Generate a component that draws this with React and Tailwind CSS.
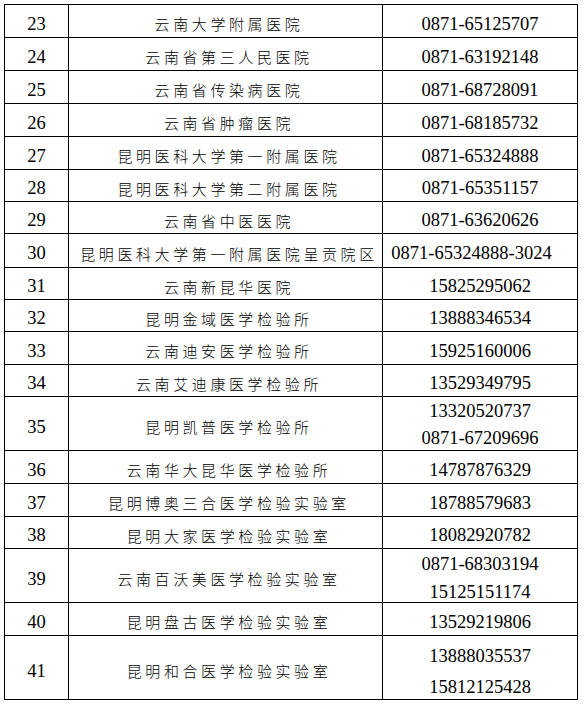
import React from "react";

const rows = [
  { no: "23", name: "云南大学附属医院", phones: ["0871-65125707"], h: "h-[33px]" },
  { no: "24", name: "云南省第三人民医院", phones: ["0871-63192148"], h: "h-[33px]" },
  { no: "25", name: "云南省传染病医院", phones: ["0871-68728091"], h: "h-[33px]" },
  { no: "26", name: "云南省肿瘤医院", phones: ["0871-68185732"], h: "h-[33px]" },
  { no: "27", name: "昆明医科大学第一附属医院", phones: ["0871-65324888"], h: "h-[33px]" },
  { no: "28", name: "昆明医科大学第二附属医院", phones: ["0871-65351157"], h: "h-[32px]" },
  { no: "29", name: "云南省中医医院", phones: ["0871-63620626"], h: "h-[32px]" },
  { no: "30", name: "昆明医科大学第一附属医院呈贡院区", phones: ["0871-65324888-3024"], h: "h-[34px]", wide: true },
  { no: "31", name: "云南新昆华医院", phones: ["15825295062"], h: "h-[32px]" },
  { no: "32", name: "昆明金域医学检验所", phones: ["13888346534"], h: "h-[32px]" },
  { no: "33", name: "云南迪安医学检验所", phones: ["15925160006"], h: "h-[33px]" },
  { no: "34", name: "云南艾迪康医学检验所", phones: ["13529349795"], h: "h-[32px]" },
  { no: "35", name: "昆明凯普医学检验所", phones: ["13320520737", "0871-67209696"], h: "h-[54px]", lead: "leading-[27px] pt-[2px]" },
  { no: "36", name: "云南华大昆华医学检验所", phones: ["14787876329"], h: "h-[33px]" },
  { no: "37", name: "昆明博奥三合医学检验实验室", phones: ["18788579683"], h: "h-[33px]" },
  { no: "38", name: "昆明大家医学检验实验室", phones: ["18082920782"], h: "h-[32px]" },
  { no: "39", name: "云南百沃美医学检验实验室", phones: ["0871-68303194", "15125151174"], h: "h-[54px]", lead: "leading-[28px] pt-[4px]" },
  { no: "40", name: "昆明盘古医学检验实验室", phones: ["13529219806"], h: "h-[33px]" },
  { no: "41", name: "昆明和合医学检验实验室", phones: ["13888035537", "15812125428"], h: "h-[63px]", lead: "leading-[31px] pt-[8px]" },
];

const serif = "font-['Liberation_Serif','Times_New_Roman',serif] text-[18.5px] text-black";
const cjk = "font-['Noto_Sans_CJK_SC',sans-serif] font-light text-[15px] tracking-[3.6px] text-black";

const App = () => {
  return (
    <div className="w-[585px] h-[706px] bg-white overflow-hidden">
      <div className="ml-[4px] mt-[4px] w-[574px] border border-black">
        {rows.map((r, i) => (
          <div
            key={r.no}
            className={`flex ${r.h} ${i < rows.length - 1 ? "border-b border-black" : ""}`}
          >
            {/* No. */}
            <div className={`w-[64px] shrink-0 border-r border-black flex items-center justify-center ${r.lead ? "pt-[8px]" : "pt-[7px]"} ${serif}`}>
              {r.no}
            </div>

            {/* Name */}
            <div className={`w-[314px] shrink-0 border-r border-black flex items-center justify-center pl-[7px] ${r.lead ? "pt-[8px]" : "pt-[7px]"} ${cjk}`}>
              {r.name}
            </div>

            {/* Phone */}
            <div className={`w-[194px] shrink-0 flex flex-col items-center justify-center ${r.lead ? r.lead : "pt-[7px]"} ${r.wide ? "pr-[17px]" : ""} ${serif}`}>
              {r.phones.map((p) => (
                <span key={p}>{p}</span>
              ))}
            </div>
          </div>
        ))}
      </div>
    </div>
  );
};

export default App;
